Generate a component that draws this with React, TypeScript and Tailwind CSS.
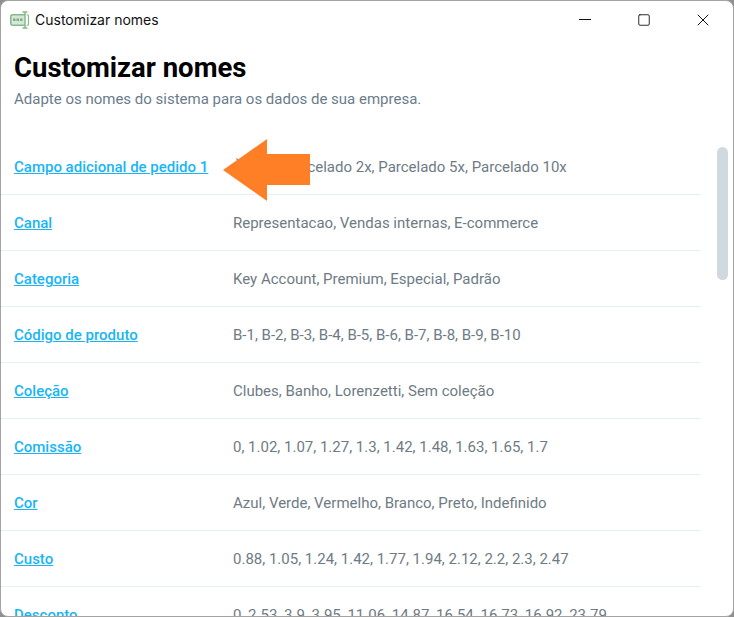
import { Square, X } from "lucide-react";

const rows = [
  ["Campo adicional de pedido 1", "À vista, Parcelado 2x, Parcelado 5x, Parcelado 10x"],
  ["Canal", "Representacao, Vendas internas, E-commerce"],
  ["Categoria", "Key Account, Premium, Especial, Padrão"],
  ["Código de produto", "B-1, B-2, B-3, B-4, B-5, B-6, B-7, B-8, B-9, B-10"],
  ["Coleção", "Clubes, Banho, Lorenzetti, Sem coleção"],
  ["Comissão", "0, 1.02, 1.07, 1.27, 1.3, 1.42, 1.48, 1.63, 1.65, 1.7"],
  ["Cor", "Azul, Verde, Vermelho, Branco, Preto, Indefinido"],
  ["Custo", "0.88, 1.05, 1.24, 1.42, 1.77, 1.94, 2.12, 2.2, 2.3, 2.47"],
  ["Desconto", "0, 2.53, 3.9, 3.95, 11.06, 14.87, 16.54, 16.73, 16.92, 23.79"],
];

function AppIcon() {
  return (
    <svg width="20" height="18" viewBox="0 0 20 18" fill="none">
      <path d="M15 3.75H2.5a1.75 1.75 0 0 0-1.75 1.75v7a1.75 1.75 0 0 0 1.75 1.75H15" fill="#d5e8d5" stroke="#86b98e" strokeWidth="1.5" />
      <path d="M16.5 3.75h1a1 1 0 0 1 1 1v8.5a1 1 0 0 1-1 1h-1" stroke="#86b98e" strokeWidth="1.2" />
      <rect x="3" y="7.5" width="2.5" height="2.5" fill="#7dad86" />
      <rect x="6.5" y="7.5" width="2.5" height="2.5" fill="#7dad86" />
      <rect x="10" y="7.5" width="2.5" height="2.5" fill="#7dad86" />
      <path d="M12.5 1h5M15 1v16M12.5 17h5" stroke="#86b98e" strokeWidth="1.5" />
    </svg>
  );
}

export default function App() {
  return (
    <div className="relative h-[617px] w-[734px] overflow-hidden bg-[#8f8f8f] font-['Roboto',sans-serif]">
      <div className="flex h-[617px] flex-col overflow-hidden rounded-lg border border-[#a3a3a3] bg-white">
        {/* title bar */}
        <div className="flex h-[38px] shrink-0 items-center pl-[9px]">
          <AppIcon />
          <span className="mb-[2px] ml-[5px] font-['Inter',sans-serif] text-[14px] text-[#111]">Customizar nomes</span>
          <div className="ml-auto flex items-center pr-[1px]">
            <button className="flex h-[38px] w-[59px] items-center justify-center">
              <span className="mb-[2px] h-[1px] w-[12px] bg-[#111]" />
            </button>
            <button className="flex h-[38px] w-[59px] items-center justify-center text-[#111]">
              <Square size={14} strokeWidth={1.5} />
            </button>
            <button className="flex h-[38px] w-[59px] items-center justify-center text-[#111]">
              <X size={20} strokeWidth={1.2} />
            </button>
          </div>
        </div>

        <div className="shrink-0 px-[13px] pt-[11px]">
          <h1 className="text-[27.5px] font-bold leading-[36px] text-black">Customizar nomes</h1>
          <p className="mt-[3px] text-[15px] leading-[20px] text-[#6b7c8c]">
            Adapte os nomes do sistema para os dados de sua empresa.
          </p>
        </div>

        <div className="mt-[30px] flex min-h-0 flex-1 overflow-hidden">
          <div className="w-[699px] shrink-0">
            {rows.map(([name, values]) => (
              <div key={name} className="flex h-[56px] items-center border-b border-[#e3f0fa] pl-[13px] pt-[2px]">
                <a className="w-[219px] shrink-0 text-[15px] font-medium text-[#19b5f5] underline">{name}</a>
                <span className="text-[15px] text-[#6e7b85]">{values}</span>
              </div>
            ))}
          </div>
          <div className="ml-[17px] mt-[8px] h-[133px] w-[11px] rounded-full bg-[#d1d9e0]" />
        </div>
      </div>

      <svg className="absolute left-[223px] top-[139px]" width="87" height="62" viewBox="0 0 87 62">
        <polygon points="0,31 44,0 44,15 87,15 87,46 44,46 44,62" fill="#ff7f27" />
      </svg>
    </div>
  );
}
